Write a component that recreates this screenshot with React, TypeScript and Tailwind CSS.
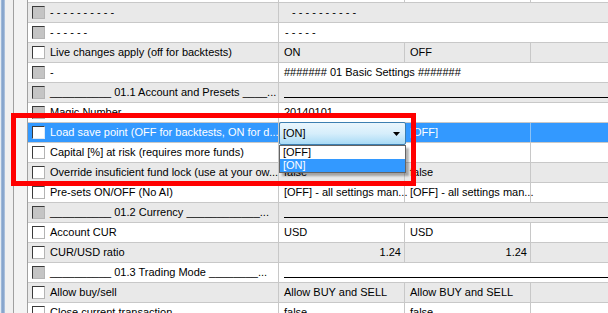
import React from 'react'

type Row = {
  name: string
  dis?: boolean
  span?: string
  spanPad?: string
  line?: boolean
  vals?: [string, string]
  right?: boolean
  sel?: boolean
}

const FONT = { fontFamily: '"Liberation Sans", Arial, sans-serif' }

const ROWS: Row[] = [
  { name: '- - - - - - - - - -', dis: true, span: '- - - - - - - - - -', spanPad: 'pl-[13px]' },
  { name: '- - - - - -', dis: true, span: '- - - - -', spanPad: 'pl-[6px]' },
  { name: 'Live changes apply (off for backtests)', vals: ['ON', 'OFF'] },
  { name: '-', dis: true, span: '####### 01 Basic Settings #######' },
  { name: '__________ 01.1 Account and Presets ____...', dis: true, line: true },
  { name: 'Magic Number', dis: true, span: '20140101' },
  { name: 'Load save point (OFF for backtests, ON for d...', sel: true, vals: ['', '[OFF]'] },
  { name: 'Capital [%] at risk (requires more funds)', vals: ['', ''] },
  { name: 'Override insuficient fund lock (use at your ow...', vals: ['false', 'false'] },
  { name: 'Pre-sets ON/OFF (No AI)', vals: ['[OFF] - all settings man...', '[OFF] - all settings man...'] },
  { name: '__________ 01.2 Currency ____________...', dis: true, line: true },
  { name: 'Account CUR', vals: ['USD', 'USD'] },
  { name: 'CUR/USD ratio', vals: ['1.24', '1.24'], right: true },
  { name: '__________ 01.3 Trading Mode ________...', dis: true, line: true },
  { name: 'Allow buy/sell', vals: ['Allow BUY and SELL', 'Allow BUY and SELL'] },
  { name: 'Close current transaction', vals: ['false', 'false'] },
]

function Check({ dis, sel }: { dis?: boolean; sel?: boolean }) {
  return (
    <span
      className={`w-[13px] h-[13px] shrink-0 border-t border-l border-t-[#3a3a3a] border-l-[#3a3a3a] border-r border-b ${
        sel ? 'border-r-[#dfe9f5] border-b-[#dfe9f5]' : 'border-r-[#b4b4b4] border-b-[#b4b4b4]'
      } ${dis ? 'bg-[#c4c4c4]' : 'bg-white'}`}
    />
  )
}

function Combo() {
  return (
    <div className="absolute left-0 top-[-1px] z-10">
      <div className="w-[127px] h-[23px] rounded-[2px] border border-[#3c7fb1] bg-gradient-to-b from-[#eaf6fd] via-[#d6eefb] to-[#a9dbf6] flex items-center pl-[3px] pr-[5px] text-black">
        <span className="flex-1">[ON]</span>
        <svg width="7" height="4" viewBox="0 0 7 4">
          <path d="M0 0h7L3.5 4z" fill="#000" />
        </svg>
      </div>
      <div className="w-[127px] border border-[#646464] bg-white shadow-[3px_3px_2px_rgba(0,0,0,0.3)] text-black leading-[13px]">
        <div className="pl-[3px] h-[13px]">[OFF]</div>
        <div className="pl-[3px] h-[13px] bg-[#3399ff] text-white">[ON]</div>
      </div>
    </div>
  )
}

export default function App() {
  return (
    <div className="relative w-[608px] h-[313px] overflow-hidden bg-white flex text-[11px] text-black" style={FONT}>
      {/* window edge + gutter */}
      <div className="w-[1px] bg-[#e4ebf3]" />
      <div className="w-[4px] bg-gradient-to-r from-[#a9c1de] via-[#7b9bc6] to-[#b8cbe3]" />
      <div className="w-[8px] bg-[#f0f0f0]" />
      <div className="w-[1px] bg-[#a0a0a0]" />
      <div className="w-[13px] bg-[#f3f3f3]" />
      <div className="w-[1px] bg-[#a0a0a0]" />

      <div className="flex-1 flex flex-col">
        <div className="h-[3px] shrink-0 flex border-b border-[#c8c8c8]">
          <div className="w-[251px] border-r border-[#c8c8c8]" />
          <div className="w-[126px] border-r border-[#c8c8c8]" />
          <div className="w-[126px] border-r border-[#c8c8c8]" />
        </div>
        {ROWS.map((r, i) => {
          const bg = r.sel ? 'bg-[#3399ff] text-white' : i % 2 === 0 ? 'bg-[#e9e9e9]' : 'bg-white'
          const sep = r.sel ? 'border-[#8cc2f5]' : 'border-[#c8c8c8]'
          return (
            <div key={i} className={`h-[20px] shrink-0 flex border-b border-[#c8c8c8] ${bg}`}>
              <div className="w-[251px] shrink-0 border-r border-[#c8c8c8] flex items-center pl-[4px] gap-[5px] whitespace-nowrap overflow-hidden">
                <Check dis={r.dis} sel={r.sel} />
                <span>{r.name}</span>
              </div>
              {r.vals ? (
                <>
                  <div className={`relative w-[126px] shrink-0 border-r ${sep} flex items-center whitespace-nowrap ${r.right ? 'justify-end pr-[3px]' : 'pl-[5px]'}`}>
                    {r.sel && <Combo />}
                    {r.vals[0]}
                  </div>
                  <div className={`w-[126px] shrink-0 border-r ${sep} flex items-center whitespace-nowrap ${r.right ? 'justify-end pr-[3px]' : 'pl-[5px]'}`}>
                    {r.vals[1]}
                  </div>
                  <div className="flex-1" />
                </>
              ) : r.line ? (
                <div className="flex-1 pl-[5px] pt-[14px]">
                  <div className="h-px bg-black" />
                </div>
              ) : (
                <div className={`flex-1 flex items-center whitespace-nowrap ${r.spanPad ?? 'pl-[5px]'}`}>{r.span}</div>
              )}
            </div>
          )
        })}
      </div>

      {/* red annotation frame */}
      <div className="absolute left-[11px] top-[113px] w-[405px] h-[73px] border-[5px] border-[#ff0000] z-20 pointer-events-none" />
    </div>
  )
}
